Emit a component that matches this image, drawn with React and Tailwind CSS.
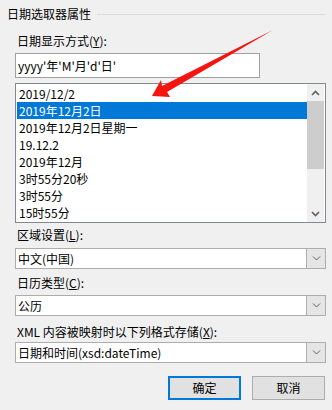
import React from "react";

const items = [
  "2019/12/2",
  "2019年12月2日",
  "2019年12月2日星期一",
  "19.12.2",
  "2019年12月",
  "3时55分20秒",
  "3时55分",
  "15时55分",
];

function Chevron({ up = false, className = "" }) {
  return (
    <svg width="9" height="6" viewBox="0 0 9 6" className={className}>
      <path
        d={up ? "M1 5 L4.5 1.5 L8 5" : "M1 1 L4.5 4.5 L8 1"}
        fill="none"
        stroke="currentColor"
        strokeWidth="1.6"
      />
    </svg>
  );
}

function Combo({ value }) {
  return (
    <div className="flex h-[21px] border border-[#adadad] bg-white">
      <div className="flex-1 pl-[2px] leading-[19px] text-black">{value}</div>
      <div className="flex w-[19px] items-center justify-center border-l border-[#adadad] bg-[#e5e5e5] text-[#606060]">
        <svg width="9" height="5" viewBox="0 0 9 5">
          <path d="M1 0.5 L4.5 4 L8 0.5" fill="none" stroke="currentColor" strokeWidth="1" />
        </svg>
      </div>
    </div>
  );
}

export default function App() {
  return (
    <div
      className="relative h-[410px] w-[332px] overflow-hidden bg-[#f0f0f0] text-[12px] text-black"
      style={{ fontFamily: '"Noto Sans CJK SC", "Noto Sans", sans-serif' }}
    >
      {/* group title */}
      <div className="flex items-center pl-[7px] pr-[6px] pt-[7px]">
        <span className="leading-[14px]">日期选取器属性</span>
        <div className="ml-[6px] h-px flex-1 bg-[#dcdcdc]" />
      </div>

      <div className="pl-[15px] pr-[6px]">
        <div className="mt-[13px] h-[14px] pl-[2px] leading-[14px]">
          日期显示方式(<span className="underline">Y</span>):
        </div>

        <div className="mt-[5px] h-[25px] w-[245px] border border-[#a0a0a0] bg-white pl-[2px] leading-[23px]">
          yyyy'年'M'月'd'日'
        </div>

        {/* list box */}
        <div className="mt-[5px] flex h-[140px] border border-[#828790] bg-white">
          <div className="flex-1 pl-px pt-px">
            {items.map((t, i) => (
              <div
                key={t}
                className={
                  "h-[17px] pl-[2px] leading-[17px] " +
                  (i === 1 ? "bg-[#0078d7] text-white" : "")
                }
              >
                {t}
              </div>
            ))}
          </div>
          <div className="flex w-[17px] flex-col bg-[#f0f0f0] text-[#606060]">
            <div className="flex h-[17px] items-center justify-center">
              <Chevron up />
            </div>
            <div className="h-[68px] bg-[#cdcdcd]" />
            <div className="flex-1" />
            <div className="flex h-[17px] items-center justify-center">
              <Chevron />
            </div>
          </div>
          <div className="w-px" />
        </div>

        <div className="mt-[5px] h-[14px] pl-[2px] leading-[14px]">
          区域设置(<span className="underline">L</span>):
        </div>
        <div className="mt-[6px]">
          <Combo value="中文(中国)" />
        </div>

        <div className="mt-[7px] h-[14px] pl-[2px] leading-[14px]">
          日历类型(<span className="underline">C</span>):
        </div>
        <div className="mt-[5px]">
          <Combo value="公历" />
        </div>

        <div className="mt-[9px] h-[14px] pl-[2px] leading-[14px]">
          XML 内容被映射时以下列格式存储(<span className="underline">X</span>):
        </div>
        <div className="mt-[3px]">
          <Combo value="日期和时间(xsd:dateTime)" />
        </div>

        <div className="mt-[13px] flex justify-end gap-[11px] pr-px">
          <button className="h-[24px] w-[73px] border-2 border-[#0078d7] bg-[#e1e1e1] leading-[20px]">
            确定
          </button>
          <button className="h-[24px] w-[73px] border border-[#adadad] bg-[#e1e1e1] leading-[22px]">
            取消
          </button>
        </div>
      </div>

      {/* red annotation arrow */}
      <svg
        className="pointer-events-none absolute left-0 top-0"
        width="332"
        height="410"
        viewBox="0 0 332 410"
      >
        <polygon
          points="152,96 161,80 162,86 273,30 167,92 170,97"
          fill="#f5140f"
        />
      </svg>
    </div>
  );
}
